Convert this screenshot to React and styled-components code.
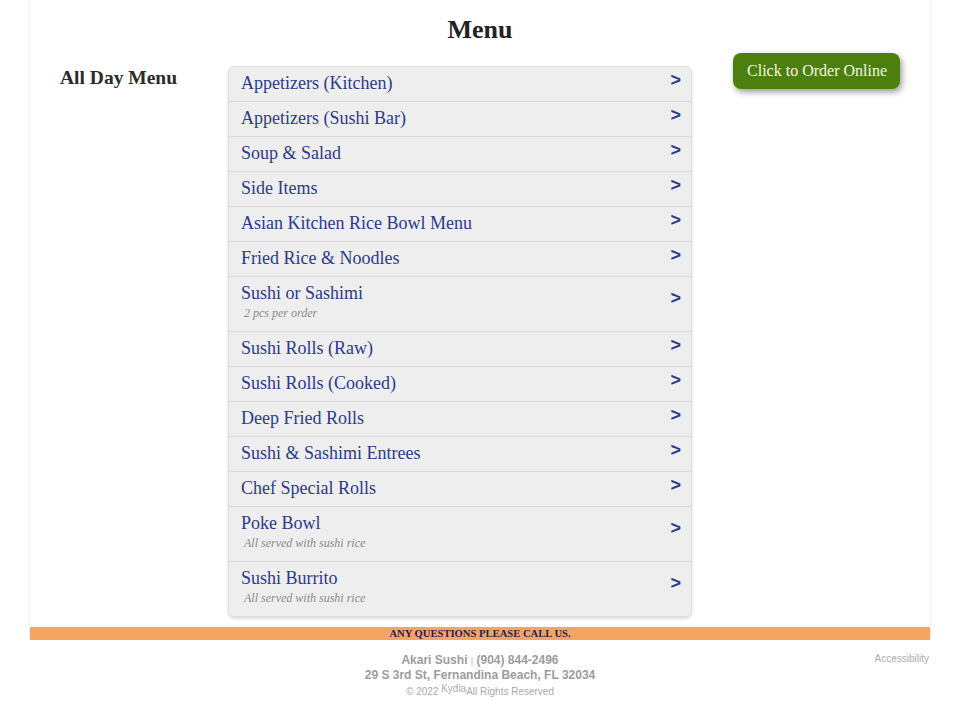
import styled, { createGlobalStyle } from "styled-components";

const GlobalStyle = createGlobalStyle`
  html, body {
    margin: 0;
    padding: 0;
    background: #fff;
  }
  body {
    font-family: "Liberation Serif", "Times New Roman", serif;
  }
`;

const categories = [
  { name: "Appetizers (Kitchen)" },
  { name: "Appetizers (Sushi Bar)" },
  { name: "Soup & Salad" },
  { name: "Side Items" },
  { name: "Asian Kitchen Rice Bowl Menu" },
  { name: "Fried Rice & Noodles" },
  { name: "Sushi or Sashimi", note: "2 pcs per order" },
  { name: "Sushi Rolls (Raw)" },
  { name: "Sushi Rolls (Cooked)" },
  { name: "Deep Fried Rolls" },
  { name: "Sushi & Sashimi Entrees" },
  { name: "Chef Special Rolls" },
  { name: "Poke Bowl", note: "All served with sushi rice" },
  { name: "Sushi Burrito", note: "All served with sushi rice" },
];

const Page = styled.div`
  width: 900px;
  margin: 0 auto;
  border-left: 1px solid #f1f1f1;
  border-right: 1px solid #f1f1f1;
`;

const Title = styled.h1`
  margin: 0;
  padding: 15px 0 8px;
  line-height: 30px;
  font-size: 26px;
  font-weight: bold;
  text-align: center;
  color: #222;
`;

const Body = styled.div`
  display: flex;
  align-items: flex-start;
`;

const Side = styled.div`
  width: 168px;
  padding-left: 30px;
`;

const SideTitle = styled.h2`
  margin: 14px 0 0;
  font-size: 19.5px;
  line-height: 22px;
  font-weight: bold;
  color: #2b2b2b;
`;

const List = styled.div`
  width: 462px;
  margin-top: 13px;
  border: 1px solid #dcdcdc;
  border-radius: 6px;
  background: #eee;
  overflow: hidden;
  box-shadow: 0 2px 3px rgba(0, 0, 0, 0.12);
`;

const Row = styled.div`
  display: flex;
  justify-content: space-between;
  padding: 6px 10px ${(p) => (p.$tall ? "11px" : "7px")} 12px;
  border-top: ${(p) => (p.$first ? "none" : "1px solid #dadada")};
`;

const RowText = styled.div`
  display: flex;
  flex-direction: column;
`;

const RowName = styled.span`
  font-size: 18px;
  line-height: 21px;
  color: #2b3a8c;
`;

const RowNote = styled.span`
  margin-top: 2px;
  padding-left: 3px;
  font-size: 12px;
  line-height: 14px;
  font-style: italic;
  color: #8a8a8a;
`;

const Arrow = styled.span`
  align-self: center;
  margin-top: -8px;
  font-family: "Liberation Sans", Arial, sans-serif;
  font-weight: bold;
  font-size: 18px;
  line-height: 18px;
  color: #2b3a8c;
`;

const Aside = styled.div`
  flex: 1;
  display: flex;
  justify-content: flex-end;
  padding-right: 30px;
`;

const OrderButton = styled.button`
  height: 36px;
  padding: 0 13px 0 14px;
  border: none;
  border-radius: 8px;
  background: #4c800e;
  color: #f5f5ea;
  font-family: "Liberation Serif", "Times New Roman", serif;
  font-size: 16px;
  line-height: 36px;
  box-shadow: 2px 3px 6px rgba(0, 0, 0, 0.4);
  cursor: pointer;
`;

const Bar = styled.div`
  margin-top: 10px;
  height: 13px;
  background: #f5a462;
  text-align: center;
  font-size: 10.6px;
  line-height: 13px;
  font-weight: bold;
  color: #2d1a58;
`;

const Footer = styled.div`
  width: 900px;
  margin: 0 auto;
  padding-top: 13px;
  display: grid;
  grid-template-columns: 1fr auto 1fr;
  font-family: "Liberation Sans", Arial, sans-serif;
`;

const FooterInfo = styled.div`
  grid-column: 2;
  text-align: center;
  color: #9c9c9c;
`;

const InfoLine = styled.div`
  font-size: 12px;
  line-height: 14px;
  font-weight: bold;
`;

const Pipe = styled.span`
  font-size: 9px;
  font-weight: normal;
  color: #bbb;
`;

const Copy = styled.div`
  font-size: 10px;
  line-height: 14px;
  color: #aaa;
`;

const Kydia = styled.span`
  font-size: 10px;
  vertical-align: 3px;
`;

const Access = styled.a`
  grid-column: 3;
  justify-self: end;
  margin-right: 1px;
  font-size: 10px;
  line-height: 12px;
  color: #aaa;
  text-decoration: none;
`;

export default function App() {
  return (
    <>
      <GlobalStyle />
      <Page>
        <Title>Menu</Title>
        <Body>
          <Side>
            <SideTitle>All Day Menu</SideTitle>
          </Side>
          <List>
            {categories.map((c, i) => (
              <Row key={c.name} $first={i === 0} $tall={!!c.note}>
                <RowText>
                  <RowName>{c.name}</RowName>
                  {c.note && <RowNote>{c.note}</RowNote>}
                </RowText>
                <Arrow>&gt;</Arrow>
              </Row>
            ))}
          </List>
          <Aside>
            <OrderButton>Click to Order Online</OrderButton>
          </Aside>
        </Body>
        <Bar>ANY QUESTIONS PLEASE CALL US.</Bar>
      </Page>
      <Footer>
        <FooterInfo>
          <InfoLine>
            Akari Sushi <Pipe>|</Pipe> (904) 844-2496
          </InfoLine>
          <InfoLine>29 S 3rd St, Fernandina Beach, FL 32034</InfoLine>
          <Copy>
            © 2022 <Kydia>Kydia</Kydia>All Rights Reserved
          </Copy>
        </FooterInfo>
        <Access href="#">Accessibility</Access>
      </Footer>
    </>
  );
}
